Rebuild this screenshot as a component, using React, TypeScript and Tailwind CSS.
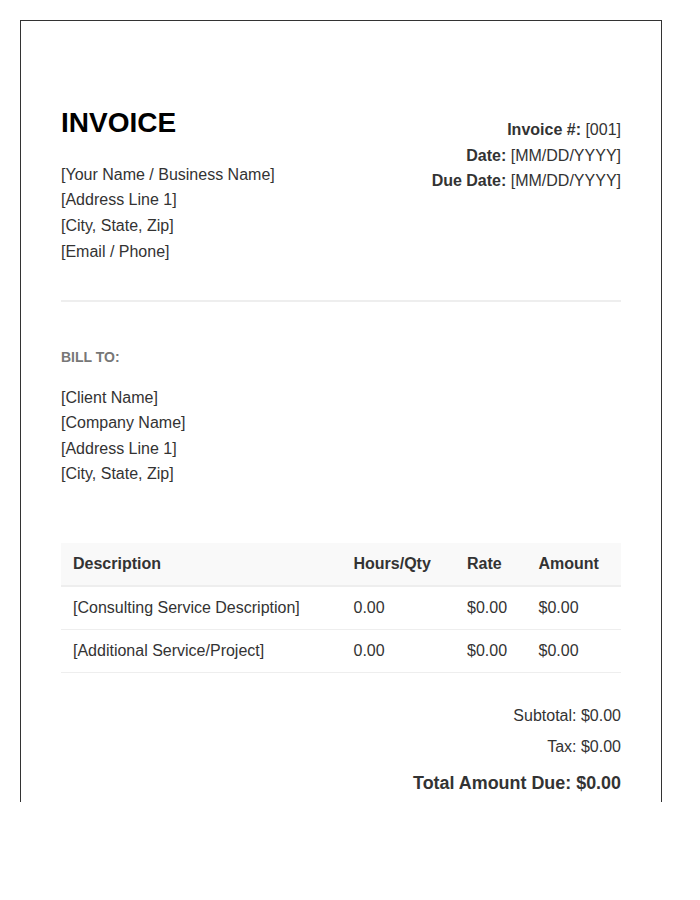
export default function App() {
  return (
    <div className="bg-white h-[900px] overflow-hidden pt-5 pl-5 font-['Liberation_Sans',Arial,sans-serif] text-[16px] text-[#333]">
      <div className="w-[642px] h-[782px] border border-b-0 border-[#333] px-10 pt-[81px] box-border">
        <div className="flex justify-between items-start pb-[35.8px] border-b-2 border-[#eee]">
          <div>
            <h1 className="text-[28px] font-bold text-black leading-[42px] mb-[17.8px]">INVOICE</h1>
            <div className="leading-[25.6px]">
              <div>[Your Name / Business Name]</div>
              <div>[Address Line 1]</div>
              <div>[City, State, Zip]</div>
              <div>[Email / Phone]</div>
            </div>
          </div>
          <div className="text-right leading-[25.6px] mt-[15px]">
            <div><b>Invoice #:</b> [001]</div>
            <div><b>Date:</b> [MM/DD/YYYY]</div>
            <div><b>Due Date:</b> [MM/DD/YYYY]</div>
          </div>
        </div>
        <div className="mt-[45px] text-[14px] font-bold text-[#777] leading-[20px]">BILL TO:</div>
        <div className="mt-[17.6px] leading-[25.6px]">
          <div>[Client Name]</div>
          <div>[Company Name]</div>
          <div>[Address Line 1]</div>
          <div>[City, State, Zip]</div>
        </div>
        <div className="mt-[56px]">
          <div className="grid grid-cols-[280.5px_113.5px_71.5px_94.5px] bg-[#f9f9f9] border-b-2 border-[#eee] h-[44px] items-center font-bold">
            <div className="pl-3">Description</div><div className="pl-3">Hours/Qty</div><div className="pl-3">Rate</div><div className="pl-3">Amount</div>
          </div>
          <div className="grid grid-cols-[280.5px_113.5px_71.5px_94.5px] border-b border-[#eee] h-[43px] items-center">
            <div className="pl-3">[Consulting Service Description]</div><div className="pl-3">0.00</div><div className="pl-3">$0.00</div><div className="pl-3">$0.00</div>
          </div>
          <div className="grid grid-cols-[280.5px_113.5px_71.5px_94.5px] border-b border-[#eee] h-[43px] items-center">
            <div className="pl-3">[Additional Service/Project]</div><div className="pl-3">0.00</div><div className="pl-3">$0.00</div><div className="pl-3">$0.00</div>
          </div>
        </div>
        <div className="mt-[30px] text-right">
          <div className="leading-[25.6px]">Subtotal: $0.00</div>
          <div className="leading-[25.6px] mt-[5px]">Tax: $0.00</div>
          <div className="leading-[28.8px] mt-[10px] text-[17.92px] font-bold">Total Amount Due: $0.00</div>
        </div>
      </div>
    </div>
  );
}
